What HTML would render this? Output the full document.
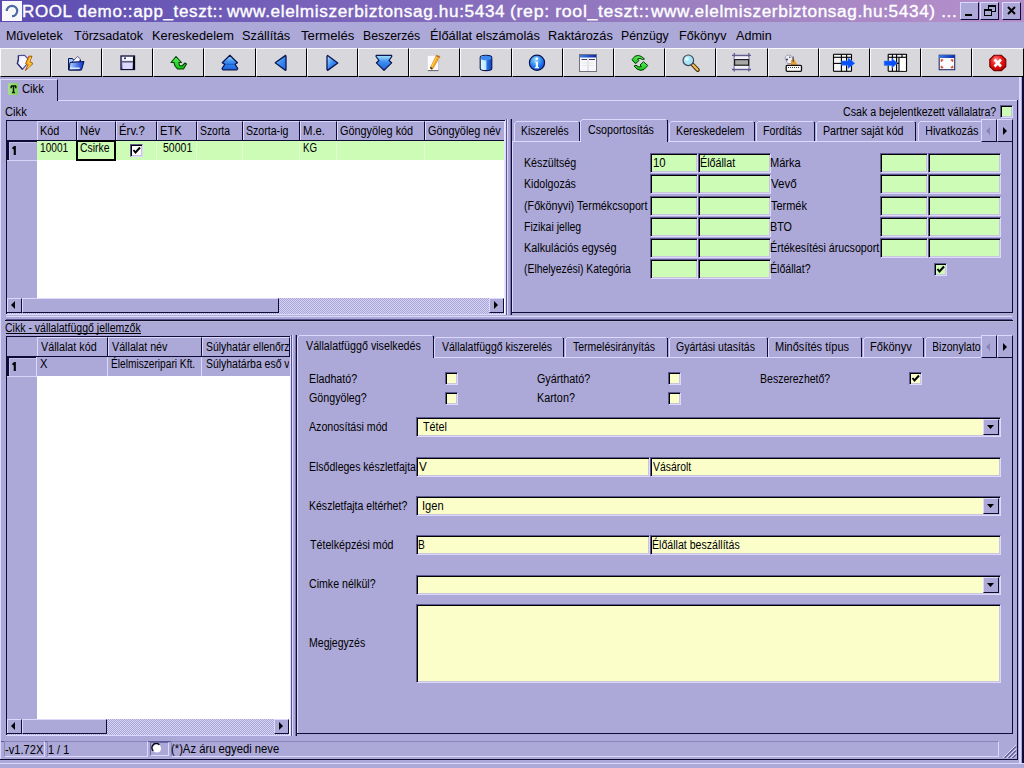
<!DOCTYPE html>
<html><head><meta charset="utf-8"><style>
html,body{margin:0;padding:0;width:1024px;height:768px;overflow:hidden;background:#aca8d8;}
.a{position:absolute;}
.t{font-family:"Liberation Sans",sans-serif;white-space:nowrap;}
</style></head><body>
<div class="a" style="left:0px;top:0px;width:1024px;height:22px;background:linear-gradient(90deg,#5a4ab0 0px,#6454b4 100px,#8068bc 400px,#9c80c0 700px,#b08cc8 934px,#b490ca 1024px)"></div>
<div class="a" style="left:2px;top:1px;width:20px;height:20px;background:#f8f8fc"></div>
<svg class="a" style="left:3px;top:3px" width="17" height="17" viewBox="0 0 17 17"><path d="M3.8 8 A5.2 5.2 0 1 1 9 13.2" fill="none" stroke="#4c6aa4" stroke-width="2.2"/></svg>
<div class="a t" style="left:23px;top:2px;font-size:16px;line-height:20px;color:#fff;-webkit-text-stroke:0.35px #fff;"><span style="display:inline-block;margin-left:-1.06px;letter-spacing:0.6px;transform:scaleX(1.0620);transform-origin:0 0">ROOL demo::app_teszt::</span></div>
<div class="a t" style="left:227px;top:2px;font-size:16px;line-height:20px;color:#fff;-webkit-text-stroke:0.35px #fff;"><span style="display:inline-block;margin-left:0.00px;letter-spacing:0.6px;transform:scaleX(1.0718);transform-origin:0 0">www.elelmiszerbiztonsag.hu:5434</span></div>
<div class="a t" style="left:511px;top:2px;font-size:16px;line-height:20px;color:#fff;-webkit-text-stroke:0.35px #fff;"><span style="display:inline-block;margin-left:-1.11px;letter-spacing:0.6px;transform:scaleX(1.1065);transform-origin:0 0">(rep: rool_teszt::</span></div>
<div class="a t" style="left:651px;top:2px;font-size:16px;line-height:20px;color:#fff;-webkit-text-stroke:0.35px #fff;"><span style="display:inline-block;margin-left:0.00px;letter-spacing:0.6px;transform:scaleX(1.0722);transform-origin:0 0">www.elelmiszerbiztonsag.hu:5434) ...</span></div>
<div class="a" style="left:960px;top:2px;width:19px;height:18px;background:#aca8d8;border-top:1px solid #dcd8ff;border-left:1px solid #dcd8ff;border-right:1px solid #0e0c34;border-bottom:1px solid #0e0c34;box-sizing:border-box"></div>
<div class="a" style="left:980px;top:2px;width:19px;height:18px;background:#aca8d8;border-top:1px solid #dcd8ff;border-left:1px solid #dcd8ff;border-right:1px solid #0e0c34;border-bottom:1px solid #0e0c34;box-sizing:border-box"></div>
<div class="a" style="left:1002px;top:2px;width:19px;height:18px;background:#aca8d8;border-top:1px solid #dcd8ff;border-left:1px solid #dcd8ff;border-right:1px solid #0e0c34;border-bottom:1px solid #0e0c34;box-sizing:border-box"></div>
<div class="a" style="left:965px;top:14px;width:7px;height:2px;background:#000"></div>
<div class="a" style="left:988px;top:5px;width:8px;height:7px;border:1px solid #000;border-top-width:2px;box-sizing:border-box"></div>
<div class="a" style="left:984px;top:9px;width:8px;height:7px;background:#aca8d8;border:1px solid #000;border-top-width:2px;box-sizing:border-box"></div>
<svg class="a" style="left:1006px;top:5px" width="11" height="11"><path d="M2 2 L9 9 M9 2 L2 9" stroke="#000" stroke-width="2"/></svg>
<div class="a t" style="left:7px;top:28px;font-size:12px;line-height:16px;color:#000;"><span style="display:inline-block;margin-left:-1.04px;letter-spacing:0px;transform:scaleX(1.0370);transform-origin:0 0">Műveletek</span></div>
<div class="a t" style="left:74px;top:28px;font-size:12px;line-height:16px;color:#000;"><span style="display:inline-block;margin-left:0.00px;letter-spacing:0px;transform:scaleX(1.0455);transform-origin:0 0">Törzsadatok</span></div>
<div class="a t" style="left:153px;top:28px;font-size:12px;line-height:16px;color:#000;"><span style="display:inline-block;margin-left:-1.07px;letter-spacing:0px;transform:scaleX(1.0667);transform-origin:0 0">Kereskedelem</span></div>
<div class="a t" style="left:243px;top:28px;font-size:12px;line-height:16px;color:#000;"><span style="display:inline-block;margin-left:-1.06px;letter-spacing:0px;transform:scaleX(1.0636);transform-origin:0 0">Szállítás</span></div>
<div class="a t" style="left:301px;top:28px;font-size:12px;line-height:16px;color:#000;"><span style="display:inline-block;margin-left:0.00px;letter-spacing:0px;transform:scaleX(1.0958);transform-origin:0 0">Termelés</span></div>
<div class="a t" style="left:364px;top:28px;font-size:12px;line-height:16px;color:#000;"><span style="display:inline-block;margin-left:-1.02px;letter-spacing:0px;transform:scaleX(1.0218);transform-origin:0 0">Beszerzés</span></div>
<div class="a t" style="left:431px;top:28px;font-size:12px;line-height:16px;color:#000;"><span style="display:inline-block;margin-left:-1.07px;letter-spacing:0px;transform:scaleX(1.0693);transform-origin:0 0">Élőállat elszámolás</span></div>
<div class="a t" style="left:549px;top:28px;font-size:12px;line-height:16px;color:#000;"><span style="display:inline-block;margin-left:-1.07px;letter-spacing:0px;transform:scaleX(1.0678);transform-origin:0 0">Raktározás</span></div>
<div class="a t" style="left:622px;top:28px;font-size:12px;line-height:16px;color:#000;"><span style="display:inline-block;margin-left:-1.02px;letter-spacing:0px;transform:scaleX(1.0217);transform-origin:0 0">Pénzügy</span></div>
<div class="a t" style="left:680px;top:28px;font-size:12px;line-height:16px;color:#000;"><span style="display:inline-block;margin-left:-1.05px;letter-spacing:0px;transform:scaleX(1.0455);transform-origin:0 0">Főkönyv</span></div>
<div class="a t" style="left:736px;top:28px;font-size:12px;line-height:16px;color:#000;"><span style="display:inline-block;margin-left:0.00px;letter-spacing:0px;transform:scaleX(1.0485);transform-origin:0 0">Admin</span></div>
<div class="a" style="left:0px;top:48px;width:51px;height:29px;background:#d8d8dc;border-top:1px solid #fafafa;border-left:1px solid #fafafa;border-right:1px solid #000;border-bottom:1px solid #000;box-sizing:border-box"></div>
<div class="a" style="left:51px;top:48px;width:51px;height:29px;background:#d8d8dc;border-top:1px solid #fafafa;border-left:1px solid #fafafa;border-right:1px solid #000;border-bottom:1px solid #000;box-sizing:border-box"></div>
<div class="a" style="left:102px;top:48px;width:51px;height:29px;background:#d8d8dc;border-top:1px solid #fafafa;border-left:1px solid #fafafa;border-right:1px solid #000;border-bottom:1px solid #000;box-sizing:border-box"></div>
<div class="a" style="left:153px;top:48px;width:51px;height:29px;background:#d8d8dc;border-top:1px solid #fafafa;border-left:1px solid #fafafa;border-right:1px solid #000;border-bottom:1px solid #000;box-sizing:border-box"></div>
<div class="a" style="left:204px;top:48px;width:52px;height:29px;background:#d8d8dc;border-top:1px solid #fafafa;border-left:1px solid #fafafa;border-right:1px solid #000;border-bottom:1px solid #000;box-sizing:border-box"></div>
<div class="a" style="left:256px;top:48px;width:51px;height:29px;background:#d8d8dc;border-top:1px solid #fafafa;border-left:1px solid #fafafa;border-right:1px solid #000;border-bottom:1px solid #000;box-sizing:border-box"></div>
<div class="a" style="left:307px;top:48px;width:51px;height:29px;background:#d8d8dc;border-top:1px solid #fafafa;border-left:1px solid #fafafa;border-right:1px solid #000;border-bottom:1px solid #000;box-sizing:border-box"></div>
<div class="a" style="left:358px;top:48px;width:51px;height:29px;background:#d8d8dc;border-top:1px solid #fafafa;border-left:1px solid #fafafa;border-right:1px solid #000;border-bottom:1px solid #000;box-sizing:border-box"></div>
<div class="a" style="left:409px;top:48px;width:51px;height:29px;background:#d8d8dc;border-top:1px solid #fafafa;border-left:1px solid #fafafa;border-right:1px solid #000;border-bottom:1px solid #000;box-sizing:border-box"></div>
<div class="a" style="left:460px;top:48px;width:52px;height:29px;background:#d8d8dc;border-top:1px solid #fafafa;border-left:1px solid #fafafa;border-right:1px solid #000;border-bottom:1px solid #000;box-sizing:border-box"></div>
<div class="a" style="left:512px;top:48px;width:51px;height:29px;background:#d8d8dc;border-top:1px solid #fafafa;border-left:1px solid #fafafa;border-right:1px solid #000;border-bottom:1px solid #000;box-sizing:border-box"></div>
<div class="a" style="left:563px;top:48px;width:51px;height:29px;background:#d8d8dc;border-top:1px solid #fafafa;border-left:1px solid #fafafa;border-right:1px solid #000;border-bottom:1px solid #000;box-sizing:border-box"></div>
<div class="a" style="left:614px;top:48px;width:51px;height:29px;background:#d8d8dc;border-top:1px solid #fafafa;border-left:1px solid #fafafa;border-right:1px solid #000;border-bottom:1px solid #000;box-sizing:border-box"></div>
<div class="a" style="left:665px;top:48px;width:51px;height:29px;background:#d8d8dc;border-top:1px solid #fafafa;border-left:1px solid #fafafa;border-right:1px solid #000;border-bottom:1px solid #000;box-sizing:border-box"></div>
<div class="a" style="left:716px;top:48px;width:52px;height:29px;background:#d8d8dc;border-top:1px solid #fafafa;border-left:1px solid #fafafa;border-right:1px solid #000;border-bottom:1px solid #000;box-sizing:border-box"></div>
<div class="a" style="left:768px;top:48px;width:51px;height:29px;background:#d8d8dc;border-top:1px solid #fafafa;border-left:1px solid #fafafa;border-right:1px solid #000;border-bottom:1px solid #000;box-sizing:border-box"></div>
<div class="a" style="left:819px;top:48px;width:51px;height:29px;background:#d8d8dc;border-top:1px solid #fafafa;border-left:1px solid #fafafa;border-right:1px solid #000;border-bottom:1px solid #000;box-sizing:border-box"></div>
<div class="a" style="left:870px;top:48px;width:51px;height:29px;background:#d8d8dc;border-top:1px solid #fafafa;border-left:1px solid #fafafa;border-right:1px solid #000;border-bottom:1px solid #000;box-sizing:border-box"></div>
<div class="a" style="left:921px;top:48px;width:51px;height:29px;background:#d8d8dc;border-top:1px solid #fafafa;border-left:1px solid #fafafa;border-right:1px solid #000;border-bottom:1px solid #000;box-sizing:border-box"></div>
<div class="a" style="left:972px;top:48px;width:52px;height:29px;background:#d8d8dc;border-top:1px solid #fafafa;border-left:1px solid #fafafa;border-right:1px solid #000;border-bottom:1px solid #000;box-sizing:border-box"></div>
<div class="a" style="left:58px;top:100px;width:960px;height:1px;background:#dcd8ff"></div>
<div class="a" style="left:0px;top:79px;width:58px;height:22px;background:#aca8d8;border-top:1px solid #dcd8ff;border-left:1px solid #dcd8ff;border-right:1px solid #0e0c34;box-sizing:border-box"></div>
<div class="a" style="left:8px;top:83px;width:10px;height:12px;background:linear-gradient(90deg,#a4e088,#7cd058);border-radius:1px"></div>
<svg class="a" style="left:8px;top:83px" width="10" height="12"><path d="M3 3 L8 3 M3.2 3 L3.2 5.2 M7.8 3 L7.8 5.2 M5.5 3 L5.5 9.6 M4 9.6 L7 9.6" stroke="#0a1a08" stroke-width="1.5" fill="none"/></svg>
<div class="a t" style="left:23px;top:81px;font-size:12px;line-height:16px;color:#000;"><span style="display:inline-block;margin-left:-0.94px;letter-spacing:0px;transform:scaleX(0.9364);transform-origin:0 0">Cikk</span></div>
<div class="a" style="left:0px;top:100px;width:1px;height:659px;background:#dcd8ff"></div>
<div class="a" style="left:1017px;top:100px;width:1px;height:660px;background:#0e0c34"></div>
<div class="a" style="left:0px;top:759px;width:1018px;height:1px;background:#0e0c34"></div>
<div class="a" style="left:1019px;top:77px;width:2px;height:687px;background:#dcd8ff"></div>
<div class="a" style="left:1022px;top:77px;width:2px;height:686px;background:#0e0c34"></div>
<div class="a" style="left:0px;top:763px;width:1024px;height:1px;background:#dcd8ff"></div>
<div class="a t" style="left:6px;top:104px;font-size:12px;line-height:16px;color:#000;"><span style="display:inline-block;margin-left:-0.93px;letter-spacing:0px;transform:scaleX(0.9318);transform-origin:0 0">Cikk</span></div>
<div class="a" style="left:6px;top:120px;width:500px;height:195px;background:#fff;border-top:1px solid #0e0c34;border-left:1px solid #0e0c34;box-sizing:border-box"></div>
<div class="a" style="left:7px;top:121px;width:30px;height:19px;background:#aca8d8"></div>
<div class="a" style="left:37px;top:121px;width:40px;height:19px;background:#aca8d8;border-left:1px solid #dcd8ff;border-top:1px solid #dcd8ff;border-right:1px solid #0e0c34;box-sizing:border-box"></div>
<div class="a t" style="left:41px;top:123px;font-size:12px;line-height:16px;color:#000;"><span style="display:inline-block;margin-left:-0.91px;letter-spacing:0px;transform:scaleX(0.9050);transform-origin:0 0">Kód</span></div>
<div class="a" style="left:77px;top:121px;width:39px;height:19px;background:#aca8d8;border-left:1px solid #dcd8ff;border-top:1px solid #dcd8ff;border-right:1px solid #0e0c34;box-sizing:border-box"></div>
<div class="a t" style="left:81px;top:123px;font-size:12px;line-height:16px;color:#000;"><span style="display:inline-block;margin-left:-0.95px;letter-spacing:0px;transform:scaleX(0.9500);transform-origin:0 0">Név</span></div>
<div class="a" style="left:116px;top:121px;width:41px;height:19px;background:#aca8d8;border-left:1px solid #dcd8ff;border-top:1px solid #dcd8ff;border-right:1px solid #0e0c34;box-sizing:border-box"></div>
<div class="a t" style="left:120px;top:123px;font-size:12px;line-height:16px;color:#000;"><span style="display:inline-block;margin-left:-0.95px;letter-spacing:0px;transform:scaleX(0.9500);transform-origin:0 0">Érv.?</span></div>
<div class="a" style="left:157px;top:121px;width:40px;height:19px;background:#aca8d8;border-left:1px solid #dcd8ff;border-top:1px solid #dcd8ff;border-right:1px solid #0e0c34;box-sizing:border-box"></div>
<div class="a t" style="left:161px;top:123px;font-size:12px;line-height:16px;color:#000;"><span style="display:inline-block;margin-left:-0.93px;letter-spacing:0px;transform:scaleX(0.9318);transform-origin:0 0">ETK</span></div>
<div class="a" style="left:197px;top:121px;width:46px;height:19px;background:#aca8d8;border-left:1px solid #dcd8ff;border-top:1px solid #dcd8ff;border-right:1px solid #0e0c34;box-sizing:border-box"></div>
<div class="a t" style="left:201px;top:123px;font-size:12px;line-height:16px;color:#000;"><span style="display:inline-block;margin-left:-0.86px;letter-spacing:0px;transform:scaleX(0.8647);transform-origin:0 0">Szorta</span></div>
<div class="a" style="left:243px;top:121px;width:57px;height:19px;background:#aca8d8;border-left:1px solid #dcd8ff;border-top:1px solid #dcd8ff;border-right:1px solid #0e0c34;box-sizing:border-box"></div>
<div class="a t" style="left:247px;top:123px;font-size:12px;line-height:16px;color:#000;"><span style="display:inline-block;margin-left:-0.88px;letter-spacing:0px;transform:scaleX(0.8826);transform-origin:0 0">Szorta-ig</span></div>
<div class="a" style="left:300px;top:121px;width:37px;height:19px;background:#aca8d8;border-left:1px solid #dcd8ff;border-top:1px solid #dcd8ff;border-right:1px solid #0e0c34;box-sizing:border-box"></div>
<div class="a t" style="left:304px;top:123px;font-size:12px;line-height:16px;color:#000;"><span style="display:inline-block;margin-left:-0.94px;letter-spacing:0px;transform:scaleX(0.9429);transform-origin:0 0">M.e.</span></div>
<div class="a" style="left:337px;top:121px;width:88px;height:19px;background:#aca8d8;border-left:1px solid #dcd8ff;border-top:1px solid #dcd8ff;border-right:1px solid #0e0c34;box-sizing:border-box"></div>
<div class="a t" style="left:341px;top:123px;font-size:12px;line-height:16px;color:#000;"><span style="display:inline-block;margin-left:-0.91px;letter-spacing:0px;transform:scaleX(0.9063);transform-origin:0 0">Göngyöleg kód</span></div>
<div class="a" style="left:425px;top:121px;width:80px;height:19px;background:#aca8d8;border-left:1px solid #dcd8ff;border-top:1px solid #dcd8ff;border-right:1px solid #0e0c34;box-sizing:border-box"></div>
<div class="a t" style="left:429px;top:123px;font-size:12px;line-height:16px;color:#000;"><span style="display:inline-block;margin-left:-0.90px;letter-spacing:0px;transform:scaleX(0.9012);transform-origin:0 0">Göngyöleg név</span></div>
<div class="a" style="left:7px;top:140px;width:498px;height:1px;background:#0e0c34"></div>
<div class="a" style="left:37px;top:141px;width:468px;height:19px;background:#ccfcb6"></div>
<div class="a" style="left:76px;top:141px;width:1px;height:19px;background:#e0fcd0"></div>
<div class="a" style="left:115px;top:141px;width:1px;height:19px;background:#e0fcd0"></div>
<div class="a" style="left:156px;top:141px;width:1px;height:19px;background:#e0fcd0"></div>
<div class="a" style="left:196px;top:141px;width:1px;height:19px;background:#e0fcd0"></div>
<div class="a" style="left:242px;top:141px;width:1px;height:19px;background:#e0fcd0"></div>
<div class="a" style="left:299px;top:141px;width:1px;height:19px;background:#e0fcd0"></div>
<div class="a" style="left:336px;top:141px;width:1px;height:19px;background:#e0fcd0"></div>
<div class="a" style="left:424px;top:141px;width:1px;height:19px;background:#e0fcd0"></div>
<div class="a" style="left:7px;top:141px;width:30px;height:19px;background:#aca8d8;border-left:2px solid #0e0c34;border-top:1px solid #0e0c34;box-sizing:border-box"></div>
<div class="a" style="left:9px;top:142px;width:27px;height:1px;background:#c4c0e8"></div>
<div class="a" style="left:9px;top:142px;width:1px;height:17px;background:#c4c0e8"></div>
<svg class="a" style="left:11px;top:146px" width="8" height="12"><path d="M1.6 2.8 L3.8 0.9 L3.8 9" fill="none" stroke="#000" stroke-width="2.1" stroke-linejoin="miter"/></svg>
<div class="a t" style="left:41px;top:140px;font-size:12px;line-height:16px;color:#000;"><span style="display:inline-block;margin-left:-0.84px;letter-spacing:0px;transform:scaleX(0.8438);transform-origin:0 0">10001</span></div>
<div class="a" style="left:76px;top:140px;width:40px;height:21px;border:2px solid #000;box-sizing:border-box"></div>
<div class="a t" style="left:81px;top:140px;font-size:12px;line-height:16px;color:#000;"><span style="display:inline-block;margin-left:-0.87px;letter-spacing:0px;transform:scaleX(0.8697);transform-origin:0 0">Csirke</span></div>
<div class="a" style="left:130px;top:144px;width:13px;height:13px;background:#fff;border-top:1px solid #5c5890;border-left:1px solid #5c5890;border-bottom:1px solid #dcd8ff;border-right:1px solid #dcd8ff;box-shadow:inset 1px 1px 0 #000,inset -1px -1px 0 #c8c4dc;box-sizing:border-box"></div>
<svg class="a" style="left:130px;top:144px" width="13" height="13"><path d="M3.5 6 L5.5 8.5 L10 3.5" fill="none" stroke="#000" stroke-width="2"/></svg>
<div class="a t" style="left:164px;top:140px;font-size:12px;line-height:16px;color:#000;"><span style="display:inline-block;margin-left:-0.88px;letter-spacing:0px;transform:scaleX(0.8781);transform-origin:0 0">50001</span></div>
<div class="a t" style="left:304px;top:140px;font-size:12px;line-height:16px;color:#000;"><span style="display:inline-block;margin-left:-0.81px;letter-spacing:0px;transform:scaleX(0.8125);transform-origin:0 0">KG</span></div>
<div class="a" style="left:7px;top:161px;width:30px;height:137px;background:#aca8d8"></div>
<div class="a" style="left:7px;top:160px;width:30px;height:1px;background:#d8d4f8"></div>
<div class="a" style="left:7px;top:298px;width:497px;height:16px;background:repeating-conic-gradient(#a8a4d4 0 25%, #d8d4f8 0 50%) 0 0/2px 2px"></div>
<div class="a" style="left:7px;top:298px;width:15px;height:15px;background:#aca8d8;border-top:1px solid #dcd8ff;border-left:1px solid #dcd8ff;border-bottom:1px solid #0e0c34;border-right:1px solid #0e0c34;box-sizing:border-box"></div>
<div class="a" style="left:11px;top:301px;width:0px;height:0px;border-right:4px solid #000;border-top:4px solid transparent;border-bottom:4px solid transparent"></div>
<div class="a" style="left:22px;top:298px;width:257px;height:15px;background:#aca8d8;border-top:1px solid #dcd8ff;border-left:1px solid #dcd8ff;border-bottom:1px solid #0e0c34;border-right:1px solid #0e0c34;box-sizing:border-box"></div>
<div class="a" style="left:489px;top:298px;width:15px;height:15px;background:#aca8d8;border-top:1px solid #dcd8ff;border-left:1px solid #dcd8ff;border-bottom:1px solid #0e0c34;border-right:1px solid #0e0c34;box-sizing:border-box"></div>
<div class="a" style="left:494px;top:301px;width:0px;height:0px;border-left:4px solid #000;border-top:4px solid transparent;border-bottom:4px solid transparent"></div>
<div class="a" style="left:6px;top:312px;width:16px;height:1px;background:#0e0c34"></div>
<div class="a" style="left:6px;top:314px;width:500px;height:1px;background:#dcd8ff"></div>
<div class="a" style="left:505px;top:120px;width:1px;height:195px;background:#dcd8ff"></div>
<div class="a" style="left:504px;top:121px;width:1px;height:177px;background:#e8e6ff"></div>
<div class="a" style="left:506px;top:119px;width:1px;height:196px;background:#5c5490"></div>
<div class="a" style="left:507px;top:119px;width:1px;height:196px;background:#dcd8ff"></div>
<div class="a" style="left:510px;top:119px;width:1px;height:196px;background:#7a74aa"></div>
<div class="a" style="left:511px;top:119px;width:1px;height:196px;background:#0e0c34"></div>
<div class="a t" style="left:844px;top:104px;font-size:12px;line-height:16px;color:#000;"><span style="display:inline-block;margin-left:-0.89px;letter-spacing:0px;transform:scaleX(0.8871);transform-origin:0 0">Csak a bejelentkezett vállalatra?</span></div>
<div class="a" style="left:1000px;top:105px;width:13px;height:13px;background:#ccfcb6;border-top:1px solid #5c5890;border-left:1px solid #5c5890;border-bottom:1px solid #dcd8ff;border-right:1px solid #dcd8ff;box-shadow:inset 1px 1px 0 #000,inset -1px -1px 0 #c8c4dc;box-sizing:border-box"></div>
<div class="a" style="left:514px;top:121px;width:66px;height:20px;background:#aca8d8;border-top:1px solid #dcd8ff;border-left:1px solid #dcd8ff;border-right:1px solid #0e0c34;box-sizing:border-box"></div>
<div class="a" style="left:514px;top:121px;width:2px;height:1px;background:#aca8d8"></div>
<div class="a" style="left:514px;top:122px;width:1px;height:1px;background:#aca8d8"></div>
<div class="a" style="left:579px;top:121px;width:1px;height:1px;background:#aca8d8"></div>
<div class="a" style="left:578px;top:121px;width:1px;height:1px;background:#aca8d8"></div>
<div class="a" style="left:515px;top:122px;width:1px;height:1px;background:#dcd8ff"></div>
<div class="a" style="left:578px;top:122px;width:1px;height:1px;background:#8884bc"></div>
<div class="a t" style="left:522px;top:123px;font-size:12px;line-height:16px;color:#000;"><span style="display:inline-block;margin-left:-0.86px;letter-spacing:0px;transform:scaleX(0.8593);transform-origin:0 0">Kiszerelés</span></div>
<div class="a" style="left:669px;top:121px;width:86px;height:20px;background:#aca8d8;border-top:1px solid #dcd8ff;border-left:1px solid #dcd8ff;border-right:1px solid #0e0c34;box-sizing:border-box"></div>
<div class="a" style="left:669px;top:121px;width:2px;height:1px;background:#aca8d8"></div>
<div class="a" style="left:669px;top:122px;width:1px;height:1px;background:#aca8d8"></div>
<div class="a" style="left:754px;top:121px;width:1px;height:1px;background:#aca8d8"></div>
<div class="a" style="left:753px;top:121px;width:1px;height:1px;background:#aca8d8"></div>
<div class="a" style="left:670px;top:122px;width:1px;height:1px;background:#dcd8ff"></div>
<div class="a" style="left:753px;top:122px;width:1px;height:1px;background:#8884bc"></div>
<div class="a t" style="left:677px;top:123px;font-size:12px;line-height:16px;color:#000;"><span style="display:inline-block;margin-left:-0.89px;letter-spacing:0px;transform:scaleX(0.8933);transform-origin:0 0">Kereskedelem</span></div>
<div class="a" style="left:756px;top:121px;width:59px;height:20px;background:#aca8d8;border-top:1px solid #dcd8ff;border-left:1px solid #dcd8ff;border-right:1px solid #0e0c34;box-sizing:border-box"></div>
<div class="a" style="left:756px;top:121px;width:2px;height:1px;background:#aca8d8"></div>
<div class="a" style="left:756px;top:122px;width:1px;height:1px;background:#aca8d8"></div>
<div class="a" style="left:814px;top:121px;width:1px;height:1px;background:#aca8d8"></div>
<div class="a" style="left:813px;top:121px;width:1px;height:1px;background:#aca8d8"></div>
<div class="a" style="left:757px;top:122px;width:1px;height:1px;background:#dcd8ff"></div>
<div class="a" style="left:813px;top:122px;width:1px;height:1px;background:#8884bc"></div>
<div class="a t" style="left:764px;top:123px;font-size:12px;line-height:16px;color:#000;"><span style="display:inline-block;margin-left:-0.88px;letter-spacing:0px;transform:scaleX(0.8837);transform-origin:0 0">Fordítás</span></div>
<div class="a" style="left:816px;top:121px;width:100px;height:20px;background:#aca8d8;border-top:1px solid #dcd8ff;border-left:1px solid #dcd8ff;border-right:1px solid #0e0c34;box-sizing:border-box"></div>
<div class="a" style="left:816px;top:121px;width:2px;height:1px;background:#aca8d8"></div>
<div class="a" style="left:816px;top:122px;width:1px;height:1px;background:#aca8d8"></div>
<div class="a" style="left:915px;top:121px;width:1px;height:1px;background:#aca8d8"></div>
<div class="a" style="left:914px;top:121px;width:1px;height:1px;background:#aca8d8"></div>
<div class="a" style="left:817px;top:122px;width:1px;height:1px;background:#dcd8ff"></div>
<div class="a" style="left:914px;top:122px;width:1px;height:1px;background:#8884bc"></div>
<div class="a t" style="left:824px;top:123px;font-size:12px;line-height:16px;color:#000;"><span style="display:inline-block;margin-left:-0.89px;letter-spacing:0px;transform:scaleX(0.8876);transform-origin:0 0">Partner saját kód</span></div>
<div class="a" style="left:918px;top:121px;width:83px;height:20px;background:#aca8d8;border-top:1px solid #dcd8ff;border-left:1px solid #dcd8ff;border-right:1px solid #0e0c34;box-sizing:border-box"></div>
<div class="a" style="left:918px;top:121px;width:2px;height:1px;background:#aca8d8"></div>
<div class="a" style="left:918px;top:122px;width:1px;height:1px;background:#aca8d8"></div>
<div class="a" style="left:1000px;top:121px;width:1px;height:1px;background:#aca8d8"></div>
<div class="a" style="left:999px;top:121px;width:1px;height:1px;background:#aca8d8"></div>
<div class="a" style="left:919px;top:122px;width:1px;height:1px;background:#dcd8ff"></div>
<div class="a" style="left:999px;top:122px;width:1px;height:1px;background:#8884bc"></div>
<div class="a t" style="left:926px;top:123px;font-size:12px;line-height:16px;color:#000;width:55px;overflow:hidden;"><span style="display:inline-block;margin-left:-0.91px;letter-spacing:0px;transform:scaleX(0.9123);transform-origin:0 0">Hivatkozás</span></div>
<div class="a" style="left:512px;top:141px;width:500px;height:1px;background:#dcd8ff"></div>
<div class="a" style="left:580px;top:119px;width:88px;height:23px;background:#aca8d8;border-top:1px solid #dcd8ff;border-left:1px solid #dcd8ff;border-right:1px solid #0e0c34;box-sizing:border-box"></div>
<div class="a" style="left:580px;top:119px;width:2px;height:1px;background:#aca8d8"></div>
<div class="a" style="left:580px;top:120px;width:1px;height:1px;background:#aca8d8"></div>
<div class="a" style="left:667px;top:119px;width:1px;height:1px;background:#aca8d8"></div>
<div class="a" style="left:666px;top:119px;width:1px;height:1px;background:#aca8d8"></div>
<div class="a" style="left:581px;top:120px;width:1px;height:1px;background:#dcd8ff"></div>
<div class="a" style="left:666px;top:120px;width:1px;height:1px;background:#8884bc"></div>
<div class="a t" style="left:589px;top:122px;font-size:12px;line-height:16px;color:#000;"><span style="display:inline-block;margin-left:-0.89px;letter-spacing:0px;transform:scaleX(0.8904);transform-origin:0 0">Csoportosítás</span></div>
<div class="a" style="left:981px;top:119px;width:16px;height:23px;background:#aca8d8;border-top:1px solid #dcd8ff;border-left:1px solid #dcd8ff;border-bottom:1px solid #0e0c34;border-right:1px solid #0e0c34;box-sizing:border-box"></div>
<div class="a" style="left:986px;top:127px;width:0px;height:0px;border-right:4px solid #8884b8;border-top:4px solid transparent;border-bottom:4px solid transparent"></div>
<div class="a" style="left:997px;top:119px;width:16px;height:23px;background:#aca8d8;border-top:1px solid #dcd8ff;border-left:1px solid #dcd8ff;border-bottom:1px solid #0e0c34;border-right:1px solid #0e0c34;box-sizing:border-box"></div>
<div class="a" style="left:1003px;top:127px;width:0px;height:0px;border-left:4px solid #000;border-top:4px solid transparent;border-bottom:4px solid transparent"></div>
<div class="a" style="left:512px;top:141px;width:1px;height:172px;background:#dcd8ff"></div>
<div class="a" style="left:1012px;top:141px;width:1px;height:172px;background:#0e0c34"></div>
<div class="a" style="left:512px;top:312px;width:501px;height:1px;background:#0e0c34"></div>
<div class="a t" style="left:525px;top:155px;font-size:12px;line-height:16px;color:#000;"><span style="display:inline-block;margin-left:-0.89px;letter-spacing:0px;transform:scaleX(0.8895);transform-origin:0 0">Készültség</span></div>
<div class="a" style="left:650px;top:153px;width:48px;height:20px;background:#ccfcb6;border-top:1px solid #5c5890;border-left:1px solid #5c5890;border-bottom:1px solid #dcd8ff;border-right:1px solid #dcd8ff;box-shadow:inset 1px 1px 0 #000,inset -1px -1px 0 #c8c4dc;box-sizing:border-box"></div>
<div class="a" style="left:698px;top:153px;width:73px;height:20px;background:#ccfcb6;border-top:1px solid #5c5890;border-left:1px solid #5c5890;border-bottom:1px solid #dcd8ff;border-right:1px solid #dcd8ff;box-shadow:inset 1px 1px 0 #000,inset -1px -1px 0 #c8c4dc;box-sizing:border-box"></div>
<div class="a t" style="left:771px;top:155px;font-size:12px;line-height:16px;color:#000;"><span style="display:inline-block;margin-left:-0.92px;letter-spacing:0px;transform:scaleX(0.9219);transform-origin:0 0">Márka</span></div>
<div class="a" style="left:880px;top:153px;width:48px;height:20px;background:#ccfcb6;border-top:1px solid #5c5890;border-left:1px solid #5c5890;border-bottom:1px solid #dcd8ff;border-right:1px solid #dcd8ff;box-shadow:inset 1px 1px 0 #000,inset -1px -1px 0 #c8c4dc;box-sizing:border-box"></div>
<div class="a" style="left:928px;top:153px;width:73px;height:20px;background:#ccfcb6;border-top:1px solid #5c5890;border-left:1px solid #5c5890;border-bottom:1px solid #dcd8ff;border-right:1px solid #dcd8ff;box-shadow:inset 1px 1px 0 #000,inset -1px -1px 0 #c8c4dc;box-sizing:border-box"></div>
<div class="a t" style="left:525px;top:176px;font-size:12px;line-height:16px;color:#000;"><span style="display:inline-block;margin-left:-0.88px;letter-spacing:0px;transform:scaleX(0.8842);transform-origin:0 0">Kidolgozás</span></div>
<div class="a" style="left:650px;top:174px;width:48px;height:20px;background:#ccfcb6;border-top:1px solid #5c5890;border-left:1px solid #5c5890;border-bottom:1px solid #dcd8ff;border-right:1px solid #dcd8ff;box-shadow:inset 1px 1px 0 #000,inset -1px -1px 0 #c8c4dc;box-sizing:border-box"></div>
<div class="a" style="left:698px;top:174px;width:73px;height:20px;background:#ccfcb6;border-top:1px solid #5c5890;border-left:1px solid #5c5890;border-bottom:1px solid #dcd8ff;border-right:1px solid #dcd8ff;box-shadow:inset 1px 1px 0 #000,inset -1px -1px 0 #c8c4dc;box-sizing:border-box"></div>
<div class="a t" style="left:771px;top:176px;font-size:12px;line-height:16px;color:#000;"><span style="display:inline-block;margin-left:0.00px;letter-spacing:0px;transform:scaleX(0.9615);transform-origin:0 0">Vevő</span></div>
<div class="a" style="left:880px;top:174px;width:48px;height:20px;background:#ccfcb6;border-top:1px solid #5c5890;border-left:1px solid #5c5890;border-bottom:1px solid #dcd8ff;border-right:1px solid #dcd8ff;box-shadow:inset 1px 1px 0 #000,inset -1px -1px 0 #c8c4dc;box-sizing:border-box"></div>
<div class="a" style="left:928px;top:174px;width:73px;height:20px;background:#ccfcb6;border-top:1px solid #5c5890;border-left:1px solid #5c5890;border-bottom:1px solid #dcd8ff;border-right:1px solid #dcd8ff;box-shadow:inset 1px 1px 0 #000,inset -1px -1px 0 #c8c4dc;box-sizing:border-box"></div>
<div class="a t" style="left:525px;top:198px;font-size:12px;line-height:16px;color:#000;"><span style="display:inline-block;margin-left:-0.90px;letter-spacing:0px;transform:scaleX(0.8956);transform-origin:0 0">(Főkönyvi) Termékcsoport</span></div>
<div class="a" style="left:650px;top:196px;width:48px;height:20px;background:#ccfcb6;border-top:1px solid #5c5890;border-left:1px solid #5c5890;border-bottom:1px solid #dcd8ff;border-right:1px solid #dcd8ff;box-shadow:inset 1px 1px 0 #000,inset -1px -1px 0 #c8c4dc;box-sizing:border-box"></div>
<div class="a" style="left:698px;top:196px;width:73px;height:20px;background:#ccfcb6;border-top:1px solid #5c5890;border-left:1px solid #5c5890;border-bottom:1px solid #dcd8ff;border-right:1px solid #dcd8ff;box-shadow:inset 1px 1px 0 #000,inset -1px -1px 0 #c8c4dc;box-sizing:border-box"></div>
<div class="a t" style="left:771px;top:198px;font-size:12px;line-height:16px;color:#000;"><span style="display:inline-block;margin-left:0.00px;letter-spacing:0px;transform:scaleX(0.9128);transform-origin:0 0">Termék</span></div>
<div class="a" style="left:880px;top:196px;width:48px;height:20px;background:#ccfcb6;border-top:1px solid #5c5890;border-left:1px solid #5c5890;border-bottom:1px solid #dcd8ff;border-right:1px solid #dcd8ff;box-shadow:inset 1px 1px 0 #000,inset -1px -1px 0 #c8c4dc;box-sizing:border-box"></div>
<div class="a" style="left:928px;top:196px;width:73px;height:20px;background:#ccfcb6;border-top:1px solid #5c5890;border-left:1px solid #5c5890;border-bottom:1px solid #dcd8ff;border-right:1px solid #dcd8ff;box-shadow:inset 1px 1px 0 #000,inset -1px -1px 0 #c8c4dc;box-sizing:border-box"></div>
<div class="a t" style="left:525px;top:219px;font-size:12px;line-height:16px;color:#000;"><span style="display:inline-block;margin-left:-0.88px;letter-spacing:0px;transform:scaleX(0.8750);transform-origin:0 0">Fizikai jelleg</span></div>
<div class="a" style="left:650px;top:217px;width:48px;height:20px;background:#ccfcb6;border-top:1px solid #5c5890;border-left:1px solid #5c5890;border-bottom:1px solid #dcd8ff;border-right:1px solid #dcd8ff;box-shadow:inset 1px 1px 0 #000,inset -1px -1px 0 #c8c4dc;box-sizing:border-box"></div>
<div class="a" style="left:698px;top:217px;width:73px;height:20px;background:#ccfcb6;border-top:1px solid #5c5890;border-left:1px solid #5c5890;border-bottom:1px solid #dcd8ff;border-right:1px solid #dcd8ff;box-shadow:inset 1px 1px 0 #000,inset -1px -1px 0 #c8c4dc;box-sizing:border-box"></div>
<div class="a t" style="left:771px;top:219px;font-size:12px;line-height:16px;color:#000;"><span style="display:inline-block;margin-left:-0.90px;letter-spacing:0px;transform:scaleX(0.8957);transform-origin:0 0">BTO</span></div>
<div class="a" style="left:880px;top:217px;width:48px;height:20px;background:#ccfcb6;border-top:1px solid #5c5890;border-left:1px solid #5c5890;border-bottom:1px solid #dcd8ff;border-right:1px solid #dcd8ff;box-shadow:inset 1px 1px 0 #000,inset -1px -1px 0 #c8c4dc;box-sizing:border-box"></div>
<div class="a" style="left:928px;top:217px;width:73px;height:20px;background:#ccfcb6;border-top:1px solid #5c5890;border-left:1px solid #5c5890;border-bottom:1px solid #dcd8ff;border-right:1px solid #dcd8ff;box-shadow:inset 1px 1px 0 #000,inset -1px -1px 0 #c8c4dc;box-sizing:border-box"></div>
<div class="a t" style="left:525px;top:240px;font-size:12px;line-height:16px;color:#000;"><span style="display:inline-block;margin-left:-0.90px;letter-spacing:0px;transform:scaleX(0.9010);transform-origin:0 0">Kalkulációs egység</span></div>
<div class="a" style="left:650px;top:238px;width:48px;height:20px;background:#ccfcb6;border-top:1px solid #5c5890;border-left:1px solid #5c5890;border-bottom:1px solid #dcd8ff;border-right:1px solid #dcd8ff;box-shadow:inset 1px 1px 0 #000,inset -1px -1px 0 #c8c4dc;box-sizing:border-box"></div>
<div class="a" style="left:698px;top:238px;width:73px;height:20px;background:#ccfcb6;border-top:1px solid #5c5890;border-left:1px solid #5c5890;border-bottom:1px solid #dcd8ff;border-right:1px solid #dcd8ff;box-shadow:inset 1px 1px 0 #000,inset -1px -1px 0 #c8c4dc;box-sizing:border-box"></div>
<div class="a t" style="left:771px;top:240px;font-size:12px;line-height:16px;color:#000;"><span style="display:inline-block;margin-left:-0.89px;letter-spacing:0px;transform:scaleX(0.8902);transform-origin:0 0">Értékesítési árucsoport</span></div>
<div class="a" style="left:880px;top:238px;width:48px;height:20px;background:#ccfcb6;border-top:1px solid #5c5890;border-left:1px solid #5c5890;border-bottom:1px solid #dcd8ff;border-right:1px solid #dcd8ff;box-shadow:inset 1px 1px 0 #000,inset -1px -1px 0 #c8c4dc;box-sizing:border-box"></div>
<div class="a" style="left:928px;top:238px;width:73px;height:20px;background:#ccfcb6;border-top:1px solid #5c5890;border-left:1px solid #5c5890;border-bottom:1px solid #dcd8ff;border-right:1px solid #dcd8ff;box-shadow:inset 1px 1px 0 #000,inset -1px -1px 0 #c8c4dc;box-sizing:border-box"></div>
<div class="a t" style="left:525px;top:261px;font-size:12px;line-height:16px;color:#000;"><span style="display:inline-block;margin-left:-0.87px;letter-spacing:0px;transform:scaleX(0.8656);transform-origin:0 0">(Elhelyezési) Kategória</span></div>
<div class="a" style="left:650px;top:259px;width:48px;height:20px;background:#ccfcb6;border-top:1px solid #5c5890;border-left:1px solid #5c5890;border-bottom:1px solid #dcd8ff;border-right:1px solid #dcd8ff;box-shadow:inset 1px 1px 0 #000,inset -1px -1px 0 #c8c4dc;box-sizing:border-box"></div>
<div class="a" style="left:698px;top:259px;width:73px;height:20px;background:#ccfcb6;border-top:1px solid #5c5890;border-left:1px solid #5c5890;border-bottom:1px solid #dcd8ff;border-right:1px solid #dcd8ff;box-shadow:inset 1px 1px 0 #000,inset -1px -1px 0 #c8c4dc;box-sizing:border-box"></div>
<div class="a t" style="left:771px;top:261px;font-size:12px;line-height:16px;color:#000;"><span style="display:inline-block;margin-left:-0.88px;letter-spacing:0px;transform:scaleX(0.8800);transform-origin:0 0">Élőállat?</span></div>
<div class="a t" style="left:654px;top:155px;font-size:12px;line-height:16px;color:#000;"><span style="display:inline-block;margin-left:-0.95px;letter-spacing:0px;transform:scaleX(0.9500);transform-origin:0 0">10</span></div>
<div class="a t" style="left:701px;top:155px;font-size:12px;line-height:16px;color:#000;"><span style="display:inline-block;margin-left:-0.89px;letter-spacing:0px;transform:scaleX(0.8947);transform-origin:0 0">Élőállat</span></div>
<div class="a" style="left:934px;top:263px;width:13px;height:13px;background:#ccfcb6;border-top:1px solid #5c5890;border-left:1px solid #5c5890;border-bottom:1px solid #dcd8ff;border-right:1px solid #dcd8ff;box-shadow:inset 1px 1px 0 #000,inset -1px -1px 0 #c8c4dc;box-sizing:border-box"></div>
<svg class="a" style="left:934px;top:263px" width="13" height="13"><path d="M3.5 6 L5.5 8.5 L10 3.5" fill="none" stroke="#000" stroke-width="2"/></svg>
<div class="a" style="left:6px;top:315px;width:1006px;height:1px;background:#b4b0d0"></div>
<div class="a" style="left:6px;top:316px;width:1006px;height:1px;background:#dcd8ff"></div>
<div class="a" style="left:6px;top:319px;width:1006px;height:1px;background:#5c5490"></div>
<div class="a" style="left:5px;top:320px;width:1008px;height:1px;background:#0e0c34"></div>
<div class="a" style="left:5px;top:321px;width:1008px;height:1px;background:#b8b4d0"></div>
<div class="a t" style="left:6px;top:320px;font-size:12px;line-height:16px;color:#000;"><span style="display:inline-block;margin-left:-0.88px;letter-spacing:0px;transform:scaleX(0.8766);transform-origin:0 0">Cikk - vállalatfüggő jellemzők</span></div>
<div class="a" style="left:6px;top:333px;width:135px;height:1px;background:#000"></div>
<div class="a" style="left:6px;top:336px;width:285px;height:399px;background:#fff;border-top:1px solid #0e0c34;border-left:1px solid #0e0c34;box-sizing:border-box"></div>
<div class="a" style="left:7px;top:337px;width:30px;height:19px;background:#aca8d8"></div>
<div class="a" style="left:37px;top:337px;width:71px;height:19px;background:#aca8d8;border-left:1px solid #dcd8ff;border-top:1px solid #dcd8ff;border-right:1px solid #0e0c34;box-sizing:border-box"></div>
<div class="a" style="left:108px;top:337px;width:94px;height:19px;background:#aca8d8;border-left:1px solid #dcd8ff;border-top:1px solid #dcd8ff;border-right:1px solid #0e0c34;box-sizing:border-box"></div>
<div class="a" style="left:202px;top:337px;width:88px;height:19px;background:#aca8d8;border-left:1px solid #dcd8ff;border-top:1px solid #dcd8ff;border-right:1px solid #0e0c34;box-sizing:border-box"></div>
<div class="a t" style="left:41px;top:339px;font-size:12px;line-height:16px;color:#000;"><span style="display:inline-block;margin-left:0.00px;letter-spacing:0px;transform:scaleX(0.8967);transform-origin:0 0">Vállalat kód</span></div>
<div class="a t" style="left:112px;top:339px;font-size:12px;line-height:16px;color:#000;"><span style="display:inline-block;margin-left:0.00px;letter-spacing:0px;transform:scaleX(0.8935);transform-origin:0 0">Vállalat név</span></div>
<div class="a t" style="left:206px;top:339px;font-size:12px;line-height:16px;color:#000;width:83px;overflow:hidden;"><span style="display:inline-block;margin-left:0px;letter-spacing:0px;transform:scaleX(0.87);transform-origin:0 0">Súlyhatár ellenőrzés</span></div>
<div class="a" style="left:7px;top:356px;width:283px;height:1px;background:#0e0c34"></div>
<div class="a" style="left:37px;top:357px;width:253px;height:19px;background:#aca8d8"></div>
<div class="a" style="left:107px;top:357px;width:1px;height:19px;background:#dcd8ff"></div>
<div class="a" style="left:201px;top:357px;width:1px;height:19px;background:#dcd8ff"></div>
<div class="a" style="left:7px;top:357px;width:30px;height:19px;background:#aca8d8;border-left:2px solid #0e0c34;border-top:1px solid #0e0c34;box-sizing:border-box"></div>
<div class="a" style="left:9px;top:358px;width:27px;height:1px;background:#c4c0e8"></div>
<div class="a" style="left:9px;top:358px;width:1px;height:17px;background:#c4c0e8"></div>
<div class="a" style="left:36px;top:357px;width:1px;height:19px;background:#dcd8ff"></div>
<svg class="a" style="left:11px;top:362px" width="8" height="12"><path d="M1.6 2.8 L3.8 0.9 L3.8 9" fill="none" stroke="#000" stroke-width="2.1" stroke-linejoin="miter"/></svg>
<div class="a t" style="left:40px;top:356px;font-size:12px;line-height:16px;color:#000;"><span style="display:inline-block;margin-left:0.00px;letter-spacing:0px;transform:scaleX(0.9250);transform-origin:0 0">X</span></div>
<div class="a t" style="left:112px;top:356px;font-size:12px;line-height:16px;color:#000;"><span style="display:inline-block;margin-left:-0.85px;letter-spacing:0px;transform:scaleX(0.8464);transform-origin:0 0">Élelmiszeripari Kft.</span></div>
<div class="a t" style="left:206px;top:356px;font-size:12px;line-height:16px;color:#000;width:83px;overflow:hidden;"><span style="display:inline-block;margin-left:0px;letter-spacing:0px;transform:scaleX(0.87);transform-origin:0 0">Súlyhatárba eső vizsgálat</span></div>
<div class="a" style="left:7px;top:376px;width:30px;height:343px;background:#aca8d8"></div>
<div class="a" style="left:7px;top:376px;width:30px;height:1px;background:#d8d4f8"></div>
<div class="a" style="left:7px;top:719px;width:282px;height:16px;background:repeating-conic-gradient(#a8a4d4 0 25%, #d8d4f8 0 50%) 0 0/2px 2px"></div>
<div class="a" style="left:7px;top:719px;width:15px;height:15px;background:#aca8d8;border-top:1px solid #dcd8ff;border-left:1px solid #dcd8ff;border-bottom:1px solid #0e0c34;border-right:1px solid #0e0c34;box-sizing:border-box"></div>
<div class="a" style="left:11px;top:722px;width:0px;height:0px;border-right:4px solid #000;border-top:4px solid transparent;border-bottom:4px solid transparent"></div>
<div class="a" style="left:22px;top:719px;width:85px;height:15px;background:#aca8d8;border-top:1px solid #dcd8ff;border-left:1px solid #dcd8ff;border-bottom:1px solid #0e0c34;border-right:1px solid #0e0c34;box-sizing:border-box"></div>
<div class="a" style="left:274px;top:719px;width:15px;height:15px;background:#aca8d8;border-top:1px solid #dcd8ff;border-left:1px solid #dcd8ff;border-bottom:1px solid #0e0c34;border-right:1px solid #0e0c34;box-sizing:border-box"></div>
<div class="a" style="left:279px;top:722px;width:0px;height:0px;border-left:4px solid #000;border-top:4px solid transparent;border-bottom:4px solid transparent"></div>
<div class="a" style="left:6px;top:733px;width:16px;height:1px;background:#0e0c34"></div>
<div class="a" style="left:6px;top:735px;width:284px;height:1px;background:#dcd8ff"></div>
<div class="a" style="left:290px;top:336px;width:1px;height:400px;background:#dcd8ff"></div>
<div class="a" style="left:291px;top:335px;width:1px;height:401px;background:#5c5490"></div>
<div class="a" style="left:292px;top:335px;width:1px;height:401px;background:#dcd8ff"></div>
<div class="a" style="left:295px;top:335px;width:1px;height:401px;background:#7a74aa"></div>
<div class="a" style="left:296px;top:335px;width:1px;height:401px;background:#0e0c34"></div>
<div class="a" style="left:434px;top:337px;width:130px;height:20px;background:#aca8d8;border-top:1px solid #dcd8ff;border-left:1px solid #dcd8ff;border-right:1px solid #0e0c34;box-sizing:border-box"></div>
<div class="a" style="left:434px;top:337px;width:2px;height:1px;background:#aca8d8"></div>
<div class="a" style="left:434px;top:338px;width:1px;height:1px;background:#aca8d8"></div>
<div class="a" style="left:563px;top:337px;width:1px;height:1px;background:#aca8d8"></div>
<div class="a" style="left:562px;top:337px;width:1px;height:1px;background:#aca8d8"></div>
<div class="a" style="left:435px;top:338px;width:1px;height:1px;background:#dcd8ff"></div>
<div class="a" style="left:562px;top:338px;width:1px;height:1px;background:#8884bc"></div>
<div class="a t" style="left:442px;top:339px;font-size:12px;line-height:16px;color:#000;"><span style="display:inline-block;margin-left:0.00px;letter-spacing:0px;transform:scaleX(0.8730);transform-origin:0 0">Vállalatfüggő kiszerelés</span></div>
<div class="a" style="left:565px;top:337px;width:103px;height:20px;background:#aca8d8;border-top:1px solid #dcd8ff;border-left:1px solid #dcd8ff;border-right:1px solid #0e0c34;box-sizing:border-box"></div>
<div class="a" style="left:565px;top:337px;width:2px;height:1px;background:#aca8d8"></div>
<div class="a" style="left:565px;top:338px;width:1px;height:1px;background:#aca8d8"></div>
<div class="a" style="left:667px;top:337px;width:1px;height:1px;background:#aca8d8"></div>
<div class="a" style="left:666px;top:337px;width:1px;height:1px;background:#aca8d8"></div>
<div class="a" style="left:566px;top:338px;width:1px;height:1px;background:#dcd8ff"></div>
<div class="a" style="left:666px;top:338px;width:1px;height:1px;background:#8884bc"></div>
<div class="a t" style="left:573px;top:339px;font-size:12px;line-height:16px;color:#000;"><span style="display:inline-block;margin-left:0.00px;letter-spacing:0px;transform:scaleX(0.8723);transform-origin:0 0">Termelésirányítás</span></div>
<div class="a" style="left:669px;top:337px;width:99px;height:20px;background:#aca8d8;border-top:1px solid #dcd8ff;border-left:1px solid #dcd8ff;border-right:1px solid #0e0c34;box-sizing:border-box"></div>
<div class="a" style="left:669px;top:337px;width:2px;height:1px;background:#aca8d8"></div>
<div class="a" style="left:669px;top:338px;width:1px;height:1px;background:#aca8d8"></div>
<div class="a" style="left:767px;top:337px;width:1px;height:1px;background:#aca8d8"></div>
<div class="a" style="left:766px;top:337px;width:1px;height:1px;background:#aca8d8"></div>
<div class="a" style="left:670px;top:338px;width:1px;height:1px;background:#dcd8ff"></div>
<div class="a" style="left:766px;top:338px;width:1px;height:1px;background:#8884bc"></div>
<div class="a t" style="left:677px;top:339px;font-size:12px;line-height:16px;color:#000;"><span style="display:inline-block;margin-left:-0.88px;letter-spacing:0px;transform:scaleX(0.8764);transform-origin:0 0">Gyártási utasítás</span></div>
<div class="a" style="left:768px;top:337px;width:94px;height:20px;background:#aca8d8;border-top:1px solid #dcd8ff;border-left:1px solid #dcd8ff;border-right:1px solid #0e0c34;box-sizing:border-box"></div>
<div class="a" style="left:768px;top:337px;width:2px;height:1px;background:#aca8d8"></div>
<div class="a" style="left:768px;top:338px;width:1px;height:1px;background:#aca8d8"></div>
<div class="a" style="left:861px;top:337px;width:1px;height:1px;background:#aca8d8"></div>
<div class="a" style="left:860px;top:337px;width:1px;height:1px;background:#aca8d8"></div>
<div class="a" style="left:769px;top:338px;width:1px;height:1px;background:#dcd8ff"></div>
<div class="a" style="left:860px;top:338px;width:1px;height:1px;background:#8884bc"></div>
<div class="a t" style="left:776px;top:339px;font-size:12px;line-height:16px;color:#000;"><span style="display:inline-block;margin-left:-0.92px;letter-spacing:0px;transform:scaleX(0.9177);transform-origin:0 0">Minősítés típus</span></div>
<div class="a" style="left:863px;top:337px;width:61px;height:20px;background:#aca8d8;border-top:1px solid #dcd8ff;border-left:1px solid #dcd8ff;border-right:1px solid #0e0c34;box-sizing:border-box"></div>
<div class="a" style="left:863px;top:337px;width:2px;height:1px;background:#aca8d8"></div>
<div class="a" style="left:863px;top:338px;width:1px;height:1px;background:#aca8d8"></div>
<div class="a" style="left:923px;top:337px;width:1px;height:1px;background:#aca8d8"></div>
<div class="a" style="left:922px;top:337px;width:1px;height:1px;background:#aca8d8"></div>
<div class="a" style="left:864px;top:338px;width:1px;height:1px;background:#dcd8ff"></div>
<div class="a" style="left:922px;top:338px;width:1px;height:1px;background:#8884bc"></div>
<div class="a t" style="left:871px;top:339px;font-size:12px;line-height:16px;color:#000;"><span style="display:inline-block;margin-left:-0.92px;letter-spacing:0px;transform:scaleX(0.9205);transform-origin:0 0">Főkönyv</span></div>
<div class="a" style="left:925px;top:337px;width:76px;height:20px;background:#aca8d8;border-top:1px solid #dcd8ff;border-left:1px solid #dcd8ff;border-right:1px solid #0e0c34;box-sizing:border-box"></div>
<div class="a" style="left:925px;top:337px;width:2px;height:1px;background:#aca8d8"></div>
<div class="a" style="left:925px;top:338px;width:1px;height:1px;background:#aca8d8"></div>
<div class="a" style="left:1000px;top:337px;width:1px;height:1px;background:#aca8d8"></div>
<div class="a" style="left:999px;top:337px;width:1px;height:1px;background:#aca8d8"></div>
<div class="a" style="left:926px;top:338px;width:1px;height:1px;background:#dcd8ff"></div>
<div class="a" style="left:999px;top:338px;width:1px;height:1px;background:#8884bc"></div>
<div class="a t" style="left:933px;top:339px;font-size:12px;line-height:16px;color:#000;width:48px;overflow:hidden;"><span style="display:inline-block;margin-left:-0.88px;letter-spacing:0px;transform:scaleX(0.8796);transform-origin:0 0">Bizonylato</span></div>
<div class="a" style="left:297px;top:357px;width:715px;height:1px;background:#dcd8ff"></div>
<div class="a" style="left:297px;top:335px;width:137px;height:23px;background:#aca8d8;border-top:1px solid #dcd8ff;border-left:1px solid #dcd8ff;border-right:1px solid #0e0c34;box-sizing:border-box"></div>
<div class="a" style="left:297px;top:335px;width:2px;height:1px;background:#aca8d8"></div>
<div class="a" style="left:297px;top:336px;width:1px;height:1px;background:#aca8d8"></div>
<div class="a" style="left:433px;top:335px;width:1px;height:1px;background:#aca8d8"></div>
<div class="a" style="left:432px;top:335px;width:1px;height:1px;background:#aca8d8"></div>
<div class="a" style="left:298px;top:336px;width:1px;height:1px;background:#dcd8ff"></div>
<div class="a" style="left:432px;top:336px;width:1px;height:1px;background:#8884bc"></div>
<div class="a t" style="left:306px;top:338px;font-size:12px;line-height:16px;color:#000;"><span style="display:inline-block;margin-left:0.00px;letter-spacing:0px;transform:scaleX(0.8922);transform-origin:0 0">Vállalatfüggő viselkedés</span></div>
<div class="a" style="left:981px;top:335px;width:16px;height:23px;background:#aca8d8;border-top:1px solid #dcd8ff;border-left:1px solid #dcd8ff;border-bottom:1px solid #0e0c34;border-right:1px solid #0e0c34;box-sizing:border-box"></div>
<div class="a" style="left:986px;top:343px;width:0px;height:0px;border-right:4px solid #8884b8;border-top:4px solid transparent;border-bottom:4px solid transparent"></div>
<div class="a" style="left:997px;top:335px;width:16px;height:23px;background:#aca8d8;border-top:1px solid #dcd8ff;border-left:1px solid #dcd8ff;border-bottom:1px solid #0e0c34;border-right:1px solid #0e0c34;box-sizing:border-box"></div>
<div class="a" style="left:1003px;top:343px;width:0px;height:0px;border-left:4px solid #000;border-top:4px solid transparent;border-bottom:4px solid transparent"></div>
<div class="a" style="left:297px;top:357px;width:1px;height:377px;background:#dcd8ff"></div>
<div class="a" style="left:1012px;top:357px;width:1px;height:377px;background:#0e0c34"></div>
<div class="a" style="left:297px;top:733px;width:716px;height:1px;background:#0e0c34"></div>
<div class="a t" style="left:310px;top:371px;font-size:12px;line-height:16px;color:#000;"><span style="display:inline-block;margin-left:-0.89px;letter-spacing:0px;transform:scaleX(0.8906);transform-origin:0 0">Eladható?</span></div>
<div class="a" style="left:445px;top:372px;width:13px;height:13px;background:#fcfeca;border-top:1px solid #5c5890;border-left:1px solid #5c5890;border-bottom:1px solid #dcd8ff;border-right:1px solid #dcd8ff;box-shadow:inset 1px 1px 0 #000,inset -1px -1px 0 #c8c4dc;box-sizing:border-box"></div>
<div class="a t" style="left:310px;top:390px;font-size:12px;line-height:16px;color:#000;"><span style="display:inline-block;margin-left:-0.89px;letter-spacing:0px;transform:scaleX(0.8905);transform-origin:0 0">Göngyöleg?</span></div>
<div class="a" style="left:445px;top:392px;width:13px;height:13px;background:#fcfeca;border-top:1px solid #5c5890;border-left:1px solid #5c5890;border-bottom:1px solid #dcd8ff;border-right:1px solid #dcd8ff;box-shadow:inset 1px 1px 0 #000,inset -1px -1px 0 #c8c4dc;box-sizing:border-box"></div>
<div class="a t" style="left:538px;top:371px;font-size:12px;line-height:16px;color:#000;"><span style="display:inline-block;margin-left:-0.90px;letter-spacing:0px;transform:scaleX(0.8966);transform-origin:0 0">Gyártható?</span></div>
<div class="a" style="left:668px;top:372px;width:13px;height:13px;background:#fcfeca;border-top:1px solid #5c5890;border-left:1px solid #5c5890;border-bottom:1px solid #dcd8ff;border-right:1px solid #dcd8ff;box-shadow:inset 1px 1px 0 #000,inset -1px -1px 0 #c8c4dc;box-sizing:border-box"></div>
<div class="a t" style="left:538px;top:390px;font-size:12px;line-height:16px;color:#000;"><span style="display:inline-block;margin-left:-0.90px;letter-spacing:0px;transform:scaleX(0.9024);transform-origin:0 0">Karton?</span></div>
<div class="a" style="left:668px;top:392px;width:13px;height:13px;background:#fcfeca;border-top:1px solid #5c5890;border-left:1px solid #5c5890;border-bottom:1px solid #dcd8ff;border-right:1px solid #dcd8ff;box-shadow:inset 1px 1px 0 #000,inset -1px -1px 0 #c8c4dc;box-sizing:border-box"></div>
<div class="a t" style="left:761px;top:371px;font-size:12px;line-height:16px;color:#000;"><span style="display:inline-block;margin-left:-0.88px;letter-spacing:0px;transform:scaleX(0.8772);transform-origin:0 0">Beszerezhető?</span></div>
<div class="a" style="left:909px;top:372px;width:13px;height:13px;background:#fcfeca;border-top:1px solid #5c5890;border-left:1px solid #5c5890;border-bottom:1px solid #dcd8ff;border-right:1px solid #dcd8ff;box-shadow:inset 1px 1px 0 #000,inset -1px -1px 0 #c8c4dc;box-sizing:border-box"></div>
<svg class="a" style="left:909px;top:372px" width="13" height="13"><path d="M3.5 6 L5.5 8.5 L10 3.5" fill="none" stroke="#000" stroke-width="2"/></svg>
<div class="a t" style="left:309px;top:419px;font-size:12px;line-height:16px;color:#000;"><span style="display:inline-block;margin-left:0.00px;letter-spacing:0px;transform:scaleX(0.8852);transform-origin:0 0">Azonosítási mód</span></div>
<div class="a" style="left:416px;top:417px;width:585px;height:20px;background:#fcfeca;border-top:1px solid #5c5890;border-left:1px solid #5c5890;border-bottom:1px solid #dcd8ff;border-right:1px solid #dcd8ff;box-shadow:inset 1px 1px 0 #000,inset -1px -1px 0 #c8c4dc;box-sizing:border-box"></div>
<div class="a" style="left:983px;top:419px;width:16px;height:16px;background:#aca8d8;border-top:1px solid #dcd8ff;border-left:1px solid #dcd8ff;border-bottom:1px solid #0e0c34;border-right:1px solid #0e0c34;box-sizing:border-box"></div>
<svg class="a" style="left:987px;top:425px" width="7" height="4"><path d="M0 0 L7 0 L3.5 4Z" fill="#000"/></svg>
<div class="a t" style="left:423px;top:419px;font-size:12px;line-height:16px;color:#000;"><span style="display:inline-block;margin-left:0.00px;letter-spacing:0px;transform:scaleX(0.9000);transform-origin:0 0">Tétel</span></div>
<div class="a t" style="left:310px;top:459px;font-size:12px;line-height:16px;color:#000;"><span style="display:inline-block;margin-left:-0.88px;letter-spacing:0px;transform:scaleX(0.8760);transform-origin:0 0">Elsődleges készletfajta</span></div>
<div class="a" style="left:416px;top:457px;width:234px;height:20px;background:#fcfeca;border-top:1px solid #5c5890;border-left:1px solid #5c5890;border-bottom:1px solid #dcd8ff;border-right:1px solid #dcd8ff;box-shadow:inset 1px 1px 0 #000,inset -1px -1px 0 #c8c4dc;box-sizing:border-box"></div>
<div class="a t" style="left:419px;top:459px;font-size:12px;line-height:16px;color:#000;"><span style="display:inline-block;margin-left:0.00px;letter-spacing:0px;transform:scaleX(0.9750);transform-origin:0 0">V</span></div>
<div class="a" style="left:650px;top:457px;width:351px;height:20px;background:#fcfeca;border-top:1px solid #5c5890;border-left:1px solid #5c5890;border-bottom:1px solid #dcd8ff;border-right:1px solid #dcd8ff;box-shadow:inset 1px 1px 0 #000,inset -1px -1px 0 #c8c4dc;box-sizing:border-box"></div>
<div class="a t" style="left:653px;top:459px;font-size:12px;line-height:16px;color:#000;"><span style="display:inline-block;margin-left:0.00px;letter-spacing:0px;transform:scaleX(0.8659);transform-origin:0 0">Vásárolt</span></div>
<div class="a t" style="left:310px;top:498px;font-size:12px;line-height:16px;color:#000;"><span style="display:inline-block;margin-left:-0.88px;letter-spacing:0px;transform:scaleX(0.8766);transform-origin:0 0">Készletfajta eltérhet?</span></div>
<div class="a" style="left:416px;top:496px;width:585px;height:20px;background:#fcfeca;border-top:1px solid #5c5890;border-left:1px solid #5c5890;border-bottom:1px solid #dcd8ff;border-right:1px solid #dcd8ff;box-shadow:inset 1px 1px 0 #000,inset -1px -1px 0 #c8c4dc;box-sizing:border-box"></div>
<div class="a" style="left:983px;top:498px;width:16px;height:16px;background:#aca8d8;border-top:1px solid #dcd8ff;border-left:1px solid #dcd8ff;border-bottom:1px solid #0e0c34;border-right:1px solid #0e0c34;box-sizing:border-box"></div>
<svg class="a" style="left:987px;top:504px" width="7" height="4"><path d="M0 0 L7 0 L3.5 4Z" fill="#000"/></svg>
<div class="a t" style="left:423px;top:498px;font-size:12px;line-height:16px;color:#000;"><span style="display:inline-block;margin-left:-0.93px;letter-spacing:0px;transform:scaleX(0.9273);transform-origin:0 0">Igen</span></div>
<div class="a t" style="left:310px;top:537px;font-size:12px;line-height:16px;color:#000;"><span style="display:inline-block;margin-left:0.00px;letter-spacing:0px;transform:scaleX(0.8882);transform-origin:0 0">Tételképzési mód</span></div>
<div class="a" style="left:416px;top:535px;width:234px;height:20px;background:#fcfeca;border-top:1px solid #5c5890;border-left:1px solid #5c5890;border-bottom:1px solid #dcd8ff;border-right:1px solid #dcd8ff;box-shadow:inset 1px 1px 0 #000,inset -1px -1px 0 #c8c4dc;box-sizing:border-box"></div>
<div class="a t" style="left:419px;top:537px;font-size:12px;line-height:16px;color:#000;"><span style="display:inline-block;margin-left:-0.86px;letter-spacing:0px;transform:scaleX(0.8571);transform-origin:0 0">B</span></div>
<div class="a" style="left:650px;top:535px;width:351px;height:20px;background:#fcfeca;border-top:1px solid #5c5890;border-left:1px solid #5c5890;border-bottom:1px solid #dcd8ff;border-right:1px solid #dcd8ff;box-shadow:inset 1px 1px 0 #000,inset -1px -1px 0 #c8c4dc;box-sizing:border-box"></div>
<div class="a t" style="left:653px;top:537px;font-size:12px;line-height:16px;color:#000;"><span style="display:inline-block;margin-left:-0.88px;letter-spacing:0px;transform:scaleX(0.8827);transform-origin:0 0">Élőállat beszállítás</span></div>
<div class="a t" style="left:310px;top:576px;font-size:12px;line-height:16px;color:#000;"><span style="display:inline-block;margin-left:-0.88px;letter-spacing:0px;transform:scaleX(0.8838);transform-origin:0 0">Cimke nélkül?</span></div>
<div class="a" style="left:416px;top:575px;width:585px;height:20px;background:#fcfeca;border-top:1px solid #5c5890;border-left:1px solid #5c5890;border-bottom:1px solid #dcd8ff;border-right:1px solid #dcd8ff;box-shadow:inset 1px 1px 0 #000,inset -1px -1px 0 #c8c4dc;box-sizing:border-box"></div>
<div class="a" style="left:983px;top:577px;width:16px;height:16px;background:#aca8d8;border-top:1px solid #dcd8ff;border-left:1px solid #dcd8ff;border-bottom:1px solid #0e0c34;border-right:1px solid #0e0c34;box-sizing:border-box"></div>
<svg class="a" style="left:987px;top:583px" width="7" height="4"><path d="M0 0 L7 0 L3.5 4Z" fill="#000"/></svg>
<div class="a t" style="left:310px;top:635px;font-size:12px;line-height:16px;color:#000;"><span style="display:inline-block;margin-left:-0.88px;letter-spacing:0px;transform:scaleX(0.8778);transform-origin:0 0">Megjegyzés</span></div>
<div class="a" style="left:416px;top:604px;width:585px;height:79px;background:#fcfeca;border-top:1px solid #5c5890;border-left:1px solid #5c5890;border-bottom:1px solid #dcd8ff;border-right:1px solid #dcd8ff;box-shadow:inset 1px 1px 0 #000,inset -1px -1px 0 #c8c4dc;box-sizing:border-box"></div>
<div class="a" style="left:1px;top:741px;width:997px;height:1px;background:#5c5896"></div>
<div class="a" style="left:4px;top:741px;width:41px;height:16px;border-top:1px solid #8884bc;border-left:1px solid #8884bc;border-bottom:1px solid #dcd8ff;border-right:1px solid #dcd8ff;box-sizing:border-box"></div>
<div class="a t" style="left:5px;top:742px;font-size:12px;line-height:16px;color:#000;"><span style="display:inline-block;margin-left:0.00px;letter-spacing:0px;transform:scaleX(0.9268);transform-origin:0 0">-v1.72X</span></div>
<div class="a" style="left:47px;top:741px;width:101px;height:16px;border-top:1px solid #8884bc;border-left:1px solid #8884bc;border-bottom:1px solid #dcd8ff;border-right:1px solid #dcd8ff;box-sizing:border-box"></div>
<div class="a t" style="left:49px;top:742px;font-size:12px;line-height:16px;color:#000;"><span style="display:inline-block;margin-left:-0.91px;letter-spacing:0px;transform:scaleX(0.9091);transform-origin:0 0">1 / 1</span></div>
<div class="a" style="left:150px;top:742px;width:19px;height:14px;border-top:1px solid #6e6aa8;border-left:1px solid #6e6aa8;border-bottom:1px solid #dcd8ff;border-right:1px solid #dcd8ff;box-sizing:border-box"></div>
<svg class="a" style="left:151px;top:743px" width="12" height="12"><circle cx="6" cy="5.5" r="4" fill="#fff"/><path d="M2.2 7.8 A4.3 4.3 0 0 1 8.3 1.7" fill="none" stroke="#000" stroke-width="1.4"/></svg>
<div class="a" style="left:171px;top:741px;width:828px;height:16px;border-top:1px solid #8884bc;border-left:1px solid #8884bc;border-bottom:1px solid #dcd8ff;border-right:1px solid #dcd8ff;box-sizing:border-box"></div>
<div class="a t" style="left:172px;top:741px;font-size:12px;line-height:16px;color:#000;"><span style="display:inline-block;margin-left:-0.94px;letter-spacing:0px;transform:scaleX(0.9377);transform-origin:0 0">(*)Az áru egyedi neve</span></div>
<svg class="a" style="left:1002px;top:744px" width="15" height="15"><path d="M14 1 L1 14 M14 5 L5 14 M14 9 L9 14" stroke="#dcd8ff" stroke-width="1"/><path d="M14 2.5 L2.5 14 M14 6.5 L6.5 14 M14 10.5 L10.5 14" stroke="#2a2860" stroke-width="1"/></svg>
<svg class="a" style="left:0;top:0" width="0" height="0"><defs>
<linearGradient id="gb" x1="0" y1="0" x2="0" y2="1"><stop offset="0" stop-color="#a8e4ff"/><stop offset="0.45" stop-color="#3c8cf0"/><stop offset="1" stop-color="#1c64e0"/></linearGradient>
<linearGradient id="gbl" x1="0" y1="0" x2="1" y2="1"><stop offset="0" stop-color="#b8ecff"/><stop offset="0.5" stop-color="#3a8af2"/><stop offset="1" stop-color="#2066e0"/></linearGradient>
<linearGradient id="gg" x1="0" y1="0" x2="0" y2="1"><stop offset="0" stop-color="#60f060"/><stop offset="1" stop-color="#10c010"/></linearGradient>
<linearGradient id="gfold" x1="0" y1="0" x2="1" y2="0"><stop offset="0" stop-color="#b8dcff"/><stop offset="1" stop-color="#0028d0"/></linearGradient>
<linearGradient id="gflop" x1="0" y1="0" x2="0" y2="1"><stop offset="0" stop-color="#f0f0ff"/><stop offset="1" stop-color="#9890d0"/></linearGradient>
<linearGradient id="gcyl" x1="0" y1="0" x2="1" y2="0"><stop offset="0" stop-color="#e0f8ff"/><stop offset="0.45" stop-color="#c0e8ff"/><stop offset="0.6" stop-color="#2a70e0"/><stop offset="1" stop-color="#0a40c0"/></linearGradient>
<radialGradient id="ginfo" cx="0.4" cy="0.3" r="0.7"><stop offset="0" stop-color="#90d8ff"/><stop offset="0.6" stop-color="#2a80f0"/><stop offset="1" stop-color="#1050d0"/></radialGradient>
<radialGradient id="gred" cx="0.4" cy="0.3" r="0.7"><stop offset="0" stop-color="#ff8a8a"/><stop offset="0.5" stop-color="#f01818"/><stop offset="1" stop-color="#c00000"/></radialGradient>
<linearGradient id="gtitle" x1="0" y1="0" x2="1" y2="0"><stop offset="0" stop-color="#3a7ae0"/><stop offset="1" stop-color="#0a2ab0"/></linearGradient>
</defs></svg>
<svg class="a" style="left:17px;top:55px;overflow:visible" width="17" height="17" viewBox="0 0 17 17"><path d="M1.4 0.6 L1.4 4.6 L0.3 8.4 L5.5 14.4 L10.8 8 L10.6 3.4 L7.4 0.2 Z" fill="#ecebff" stroke="#504c98" stroke-width="1.1" stroke-linejoin="round"/><path d="M1.4 0.6 L1.4 4.8 L0.3 8.4 L5.5 14.4" fill="none" stroke="#2c2a70" stroke-width="1.2"/><path d="M2.5 5 L6 2 L9 4 L8 9 L5 12 L2 8.5Z" fill="#f8f8ff"/><path d="M11.8 1.2 L15 1.2 L12.8 6.4 L16 8.6 L8.4 15.6 L10.6 10.4 L8.6 8.6 Z" fill="#f0a010" stroke="#a05010" stroke-width="0.9" stroke-linejoin="round"/><path d="M13.6 2.2 L11.2 7.8 L14 8.8 L10.5 13" fill="none" stroke="#ffd040" stroke-width="1.1"/></svg>
<svg class="a" style="left:68px;top:55px;overflow:visible" width="17" height="17" viewBox="0 0 17 17"><path d="M0.5 3.5 L4.5 3.5 L5.5 5 L12.5 5 L12.5 15 L0.5 15 Z" fill="#9cc8ff" stroke="#0a1450" stroke-width="1"/><path d="M4 7 L9.5 1.5 L12.5 4 L11 7 Z" fill="#f4f4ff" stroke="#404080" stroke-width="0.8"/><path d="M2 7.5 L16 6.5 L13.5 15 L1 15 Z" fill="url(#gfold)" stroke="#0a1450" stroke-width="1"/><path d="M2.5 12.5 L12 12.5 L11.5 14 L2 14Z" fill="#e8f4ff" opacity="0.9"/></svg>
<svg class="a" style="left:119px;top:55px;overflow:visible" width="17" height="17" viewBox="0 0 17 17"><rect x="2" y="1" width="13.5" height="13.5" fill="url(#gflop)" stroke="#10103a" stroke-width="1.3"/><rect x="3.5" y="2" width="10" height="3.5" fill="#f4f8ff"/><circle cx="6" cy="3.2" r="1" fill="#202040"/><rect x="3" y="6" width="11" height="1.5" fill="#606080"/><rect x="4" y="8" width="9" height="6" fill="#dcd8ff"/><path d="M14.8 1.5 L14.8 14.5" stroke="#000" stroke-width="1.5"/></svg>
<svg class="a" style="left:170px;top:55px;overflow:visible" width="17" height="17" viewBox="0 0 17 17"><path d="M6 1.5 L11.5 7.5 L8.8 7.5 L9.5 10.5 L12 11 L15 8 L16.5 9 L13.5 14 L7.5 14 L5 11 L4 7.5 L1 7.5 Z" fill="url(#gg)" stroke="#004000" stroke-width="1.1" stroke-linejoin="round"/></svg>
<svg class="a" style="left:221px;top:55px;overflow:visible" width="17" height="17" viewBox="0 0 17 17"><path d="M8.9 0.3 L16.5 7.8 L14 9.3 L16.8 13.5 L16 14.8 L1.8 14.8 L1 13.5 L3.8 9.3 L1.2 7.8 Z" fill="url(#gb)" stroke="#0a1450" stroke-width="1.2" stroke-linejoin="round"/><path d="M4 9.3 L14 9.3" stroke="#1450c0" stroke-width="0.8"/></svg>
<svg class="a" style="left:273px;top:55px;overflow:visible" width="17" height="17" viewBox="0 0 17 17"><path d="M2.2 7.8 L12.6 0.4 L13 1.5 L13 14.5 L12.6 15.4 Z" fill="url(#gbl)" stroke="#0a1450" stroke-width="1.3" stroke-linejoin="round"/></svg>
<svg class="a" style="left:324px;top:55px;overflow:visible" width="17" height="17" viewBox="0 0 17 17"><path d="M13.8 8 L3.6 0.4 L3 1.5 L3 14.5 L3.6 15.4 Z" fill="url(#gbl)" stroke="#0a1450" stroke-width="1.3" stroke-linejoin="round"/></svg>
<svg class="a" style="left:375px;top:55px;overflow:visible" width="17" height="17" viewBox="0 0 17 17"><path d="M1.2 0.3 L16.6 0.3 L16.8 1.5 L14 5.5 L16.6 7.8 L9 15.4 L1.4 7.8 L4 5.5 L1 1.5 Z" fill="url(#gb)" stroke="#0a1450" stroke-width="1.2" stroke-linejoin="round"/></svg>
<svg class="a" style="left:426px;top:55px;overflow:visible" width="17" height="17" viewBox="0 0 17 17"><rect x="1.8" y="0.9" width="10.8" height="14.6" fill="#fcfcff"/><path d="M1.8 15.6 L12.6 15.6" stroke="#6a6a74" stroke-width="1.1"/><path d="M12.6 5 L12.6 15" stroke="#c0c0dc" stroke-width="0.9"/><path d="M10.4 0.2 L14 1.4 L7 13.6 L5 14 L4.6 12.2 Z" fill="#f6a818" stroke="#c87810" stroke-width="0.6" stroke-linejoin="round"/><path d="M11.2 1 L5.8 11.6" stroke="#ffd860" stroke-width="1"/><path d="M10.4 0.2 L14 1.4 L13.3 2.6 L9.8 1.3Z" fill="#a86a40"/><path d="M4.6 12.2 L5 14 L6.4 13.7Z" fill="#403020" stroke="#403020" stroke-width="0.8"/></svg>
<svg class="a" style="left:477px;top:55px;overflow:visible" width="17" height="17" viewBox="0 0 17 17"><path d="M3.2 2.5 Q3.2 0.3 9 0.3 Q14.8 0.3 14.8 2.5 L14.8 13.5 Q14.8 15.6 9 15.6 Q3.2 15.6 3.2 13.5 Z" fill="url(#gcyl)" stroke="#0a1450" stroke-width="1.1"/><ellipse cx="9" cy="3" rx="5.5" ry="2.3" fill="#3a88f0"/></svg>
<svg class="a" style="left:529px;top:55px;overflow:visible" width="17" height="17" viewBox="0 0 17 17"><circle cx="8" cy="7.8" r="7.6" fill="url(#ginfo)" stroke="#0a1450" stroke-width="1.2"/><circle cx="7.8" cy="3.8" r="1.3" fill="#fff"/><path d="M6 6.5 L9 6.5 L9 12 L10 12 L10 13.2 L5.8 13.2 L5.8 12 L6.8 12 L6.8 7.6 L6 7.6 Z" fill="#f0f8ff"/></svg>
<svg class="a" style="left:580px;top:55px;overflow:visible" width="17" height="17" viewBox="0 0 17 17"><rect x="-0.5" y="-0.5" width="17" height="17" fill="#f8f8fc" stroke="#707080" stroke-width="1"/><rect x="0" y="0" width="16" height="2.5" fill="url(#gtitle)"/><path d="M1.5 4.5 L7 4.5 M9 4.5 L15 4.5" stroke="#404060" stroke-width="1"/><path d="M8 3 L8 16" stroke="#d0d0d8" stroke-width="1"/><path d="M2 8 L7 8 M2 10.5 L7 10.5 M9 8 L14 8 M9 10.5 L14 10.5" stroke="#e4ece4" stroke-width="1"/></svg>
<svg class="a" style="left:631px;top:55px;overflow:visible" width="17" height="17" viewBox="0 0 17 17"><path d="M1 4.8 L4 1.2 Q7.5 -0.5 10.5 1.5 L13.5 4 L11.5 4.5 Q9 2.5 6.5 4 L8 5.5 L4.5 8.7 Z" fill="url(#gg)" stroke="#003800" stroke-width="1" stroke-linejoin="round"/><path d="M16.8 10.5 L13 14.5 Q9.5 16.5 6 14 L3 11 L5 10.3 Q8 13 10.5 11.5 L9 10 L12.5 6.8 Z" fill="url(#gg)" stroke="#003800" stroke-width="1" stroke-linejoin="round"/></svg>
<svg class="a" style="left:682px;top:55px;overflow:visible" width="17" height="17" viewBox="0 0 17 17"><path d="M10.6 9.6 L15.8 15" stroke="#4a3000" stroke-width="4" stroke-linecap="round"/><path d="M10.8 9.8 L15.6 14.8" stroke="#f0c060" stroke-width="2" stroke-linecap="round"/><circle cx="6.3" cy="5.3" r="5.3" fill="#a8e4f8" stroke="#404858" stroke-width="1.2"/><circle cx="5" cy="4" r="2" fill="#e4f8ff"/></svg>
<svg class="a" style="left:733px;top:55px;overflow:visible" width="17" height="17" viewBox="0 0 17 17"><path d="M-1 0.3 L18 0.3 M-1 14.5 L18 14.5" stroke="#605c90" stroke-width="1.3"/><path d="M1.3 -2 L1.3 16.5 M15.8 -2 L15.8 16.5" stroke="#605c90" stroke-width="1.3"/><rect x="1.5" y="2" width="14" height="2" fill="#f0eeff"/><rect x="1.5" y="11" width="14" height="2.5" fill="#f0eeff"/><rect x="1.6" y="4.6" width="14" height="5.6" fill="#a8a8a8" stroke="#202020" stroke-width="1.2"/></svg>
<svg class="a" style="left:785px;top:55px;overflow:visible" width="17" height="17" viewBox="0 0 17 17"><path d="M0 3 Q1 -0.5 5 0.2 Q8 1 7.5 6 L6 8.5 L2.5 8.5 Z" fill="#f0f0f8" stroke="#8080a0" stroke-width="0.7"/><circle cx="2" cy="4.5" r="1" fill="#303050"/><circle cx="4.8" cy="2.3" r="0.7" fill="#303050"/><path d="M6 5 L9 4 L12.5 10 L6 10 Z" fill="#e8a030"/><path d="M8.2 1.5 L8.2 7" stroke="#404040" stroke-width="1"/><rect x="1.2" y="10.3" width="15.3" height="6" rx="1" fill="#fafafa" stroke="#101010" stroke-width="1.3"/><path d="M3 12.5 L14 12.5" stroke="#404040" stroke-width="1.2" stroke-dasharray="1 1"/></svg>
<svg class="a" style="left:836px;top:55px;overflow:visible" width="17" height="17" viewBox="0 0 17 17"><rect x="-2.5" y="-0.7" width="18" height="17" fill="#f4f4f4"/><path d="M-2.5 -0.7 L15.5 -0.7" stroke="#000" stroke-width="1.1"/><path d="M-2.5 2.3 L15.5 2.3" stroke="#000" stroke-width="1.1"/><path d="M-2.5 8.4 L15.5 8.4" stroke="#000" stroke-width="1.1"/><path d="M-2.5 16.3 L15.5 16.3" stroke="#000" stroke-width="1.1"/><path d="M-2.5 -0.7 L-2.5 16.3" stroke="#000" stroke-width="1.1"/><path d="M5.4 -0.7 L5.4 16.3" stroke="#000" stroke-width="1.1"/><path d="M10.6 -0.7 L10.6 16.3" stroke="#000" stroke-width="1.1"/><path d="M15.5 -0.7 L15.5 16.3" stroke="#000" stroke-width="1.1"/><path d="M5.7 6 L12 6 L12 2.8 L18.8 8.3 L12 13.5 L12 10.2 L5.7 10.2 Z" fill="#0a50f8" stroke="#3a80ff" stroke-width="0.6"/></svg>
<svg class="a" style="left:887px;top:55px;overflow:visible" width="17" height="17" viewBox="0 0 17 17"><rect x="1.2" y="-0.7" width="18.3" height="17" fill="#f4f4f4"/><path d="M1.2 -0.7 L19.5 -0.7" stroke="#000" stroke-width="1.1"/><path d="M1.2 2.3 L19.5 2.3" stroke="#000" stroke-width="1.1"/><path d="M1.2 8.4 L19.5 8.4" stroke="#000" stroke-width="1.1"/><path d="M1.2 16.3 L19.5 16.3" stroke="#000" stroke-width="1.1"/><path d="M1.2 -0.7 L1.2 16.3" stroke="#000" stroke-width="1.1"/><path d="M5.4 -0.7 L5.4 16.3" stroke="#000" stroke-width="1.1"/><path d="M9.6 -0.7 L9.6 16.3" stroke="#000" stroke-width="1.1"/><path d="M15 -0.7 L15 16.3" stroke="#000" stroke-width="1.1"/><path d="M19.5 -0.7 L19.5 16.3" stroke="#000" stroke-width="1.1"/><path d="M-2.8 6 L5 6 L5 3.5 L10.5 8.2 L5 12.8 L5 10.4 L-2.8 10.4 Z" fill="#0a50f8" stroke="#3a80ff" stroke-width="0.6"/><rect x="12" y="3" width="7" height="12.8" fill="#fff"/><path d="M12 3 L12 16.3 M19.5 -0.7 L19.5 16.3 M10 8.4 L12 8.4" stroke="#000" stroke-width="1.1"/></svg>
<svg class="a" style="left:938px;top:55px;overflow:visible" width="17" height="17" viewBox="0 0 17 17"><rect x="1.2" y="0.2" width="15.5" height="14.5" fill="#fbfbff" stroke="#203070" stroke-width="1.1"/><rect x="1.2" y="0.2" width="15.5" height="2.8" fill="url(#gtitle)"/><path d="M3 4.5 L5 4.5 L5 5.5 L4 5.5 L4 6.5 L3 6.5Z M15 4.5 L13 4.5 L13 5.5 L14 5.5 L14 6.5 L15 6.5Z M3 13 L5 13 L5 12 L4 12 L4 11 L3 11Z M15 13 L13 13 L13 12 L14 12 L14 11 L15 11Z" fill="#b02810" stroke="#e07050" stroke-width="0.8"/></svg>
<svg class="a" style="left:989px;top:55px;overflow:visible" width="17" height="17" viewBox="0 0 17 17"><path d="M5 0.3 L12.5 0.3 L16.8 4.5 L16.8 11.5 L12.5 15.6 L5 15.6 L0.8 11.5 L0.8 4.5 Z" fill="url(#gred)" stroke="#700000" stroke-width="1.1" stroke-linejoin="round"/><path d="M5.5 4.5 L12 11.5 M12 4.5 L5.5 11.5" stroke="#fff" stroke-width="2.6"/></svg>
</body></html>
